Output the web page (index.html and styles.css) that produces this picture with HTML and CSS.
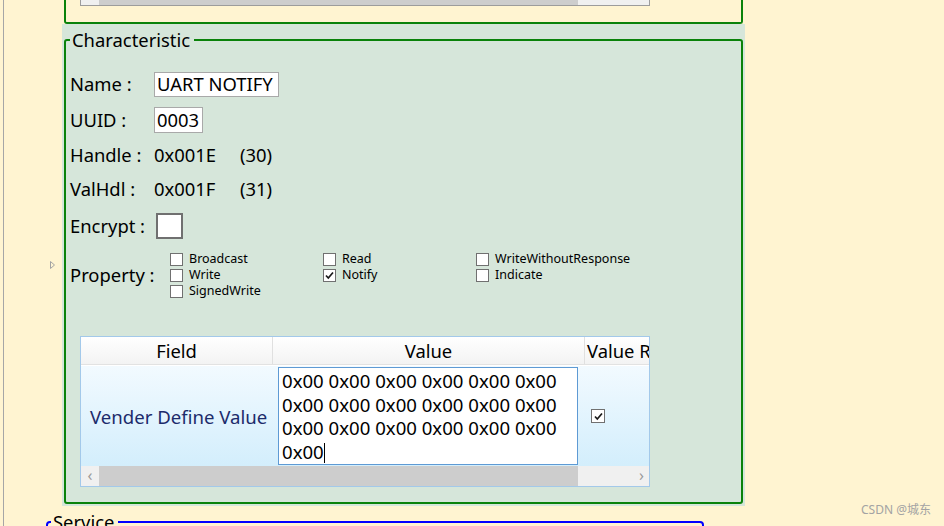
FILE: index.html
```html
<!DOCTYPE html>
<html>
<head>
<meta charset="utf-8">
<link rel="stylesheet" href="styles.css">
</head>
<body>
<div class="page">
  <div class="list-row">
    <div class="gutter"></div>
    <div class="item">
      <div class="prev-box">
        <div class="mini-scroll">
          <span class="sb-btn"></span><span class="sb-thumb"></span><span class="sb-rest"></span>
        </div>
      </div>
    </div>
  </div>

  <div class="list-row">
    <div class="gutter">
      <svg class="expander" width="6" height="8" viewBox="0 0 6 8"><path d="M0.5 0.5 L4.5 4 L0.5 7.5 Z" fill="none" stroke="#a3a3a3" stroke-width="1"/></svg>
    </div>
    <div class="item selected">
      <fieldset class="char">
        <legend>Characteristic</legend>
        <div class="row r-name">
          <span class="lbl">Name :</span>
          <span class="field f-name">UART NOTIFY</span>
        </div>
        <div class="row r-uuid">
          <span class="lbl">UUID :</span>
          <span class="field f-uuid">0003</span>
        </div>
        <div class="row r-handle">
          <span class="lbl">Handle :</span>
          <span class="hex">0x001E</span>
          <span>(30)</span>
        </div>
        <div class="row r-valhdl">
          <span class="lbl">ValHdl :</span>
          <span class="hex">0x001F</span>
          <span>(31)</span>
        </div>
        <div class="row r-encrypt">
          <span class="lbl">Encrypt :</span>
          <span class="big-check"></span>
        </div>
        <div class="row r-prop">
          <span class="lbl lbl-prop">Property :</span>
          <div class="props">
            <label class="cb"><span class="box"></span>Broadcast</label>
            <label class="cb"><span class="box"></span>Read</label>
            <label class="cb"><span class="box"></span>WriteWithoutResponse</label>
            <label class="cb"><span class="box"></span>Write</label>
            <label class="cb"><span class="box"><svg width="11" height="11" viewBox="0 0 11 11"><path d="M2 5.5 L4.3 8 L9 2.5" fill="none" stroke="#1a1a1a" stroke-width="1.7"/></svg></span>Notify</label>
            <label class="cb"><span class="box"></span>Indicate</label>
            <label class="cb"><span class="box"></span>SignedWrite</label>
          </div>
        </div>

        <div class="grid">
          <div class="grid-head">
            <div class="hcell c-field">Field</div>
            <div class="hcell c-value">Value</div>
            <div class="hcell c-vr">Value R</div>
          </div>
          <div class="grid-row">
            <div class="cell c-field vname">Vender Define Value</div>
            <div class="cell c-value">
              <div class="textarea">0x00 0x00 0x00 0x00 0x00 0x00<br>0x00 0x00 0x00 0x00 0x00 0x00<br>0x00 0x00 0x00 0x00 0x00 0x00<br>0x00<span class="caret"></span></div>
            </div>
            <div class="cell c-vr">
              <span class="box small-box"><svg width="11" height="11" viewBox="0 0 11 11"><path d="M2 5.5 L4.3 8 L9 2.5" fill="none" stroke="#1a1a1a" stroke-width="1.7"/></svg></span>
            </div>
          </div>
          <div class="grid-scroll">
            <span class="sb-btn">&lsaquo;</span><span class="sb-thumb"></span><span class="sb-rest"><span class="sb-arrow">&rsaquo;</span></span>
          </div>
        </div>
      </fieldset>
    </div>
  </div>

  <fieldset class="service">
    <legend>Service</legend>
  </fieldset>
</div>
<div class="watermark">CSDN @城东</div>
</body>
</html>
```

FILE: styles.css
```css
html, body {
  margin: 0;
  padding: 0;
}
body {
  background: #fff4d1;
  font-family: "Noto Sans", "Noto Sans CJK SC", sans-serif;
  color: #000;
  width: 944px;
  height: 526px;
  overflow: hidden;
  position: relative;
}
.page {
  margin-left: 3px;
  border-left: 1px solid #a6a6a6;
  height: 526px;
}
.list-row {
  display: flex;
}
.gutter {
  width: 58px;
  flex: none;
  display: flex;
  align-items: center;
  justify-content: flex-end;
  padding-right: 6px;
  box-sizing: border-box;
}
.expander {
  display: block;
}
.item {
  width: 683px;
  flex: none;
  padding: 0 2px;
  box-sizing: border-box;
}
.prev-box {
  height: 24px;
  box-sizing: border-box;
  border: 2px solid #0a820a;
  border-top: none;
  border-radius: 0 0 3px 3px;
}
.mini-scroll {
  margin-left: 14px;
  width: 570px;
  height: 6px;
  box-sizing: border-box;
  border: 1px solid #9c9c9c;
  border-top: none;
  display: flex;
}
.sb-btn {
  width: 18px;
  flex: none;
  background: #f0f0f0;
}
.sb-thumb {
  width: 479px;
  flex: none;
  background: #cdcdcd;
}
.sb-rest {
  flex: 1;
  background: #f0f0f0;
}
.selected {
  background: #d6e6da;
  padding-top: 6px;
  padding-bottom: 2px;
}
fieldset.char {
  margin: 0;
  border: 2px solid #0a820a;
  border-radius: 3px;
  padding: 16px 0 15px 4px;
  min-width: 0;
}
fieldset.char legend {
  font-size: 18.4px;
  line-height: 20px;
  padding: 0 4px 0 2px;
}
.row {
  display: flex;
  align-items: center;
  font-size: 18.4px;
  line-height: 22px;
}
.lbl {
  width: 84px;
  flex: none;
}
.r-name, .r-uuid { height: 36px; }
.r-handle, .r-valhdl { height: 34px; }
.r-encrypt { height: 40px; }
.r-prop { height: 50px; margin-top: 4px; }
.field {
  background: #fff;
  border: 1px solid #a9a9a9;
  padding: 0 2px;
  box-sizing: border-box;
  display: flex;
  align-items: center;
  white-space: nowrap;
}
.f-name { width: 125px; height: 25px; }
.f-uuid { width: 49px; height: 26px; }
.hex {
  width: 86px;
  flex: none;
}
.big-check {
  margin-left: 2px;
  width: 27px;
  height: 26px;
  box-sizing: border-box;
  border: 2px solid #707070;
  background: #fff;
}
.lbl-prop {
  width: 100px;
}
.props {
  display: grid;
  grid-template-columns: 153px 153px auto;
  grid-auto-rows: 16px;
  font-size: 12.5px;
  line-height: 16px;
}
.cb {
  display: flex;
  align-items: center;
  gap: 6px;
  white-space: nowrap;
}
.box {
  width: 13px;
  height: 13px;
  box-sizing: border-box;
  border: 1px solid #707070;
  background: #fff;
  display: flex;
  align-items: center;
  justify-content: center;
  flex: none;
}
.box svg { display: block; }

.grid {
  margin: 36px 0 0 10px;
  width: 570px;
  height: 151px;
  box-sizing: border-box;
  border: 1px solid #a3c9ea;
  overflow: hidden;
  display: flex;
  flex-direction: column;
}
.grid-head {
  display: flex;
  height: 28px;
  flex: none;
  background: linear-gradient(#ffffff, #f3f3f3);
  border-bottom: 1px solid #e2e2e2;
  box-sizing: border-box;
  font-size: 18.4px;
}
.hcell {
  display: flex;
  align-items: center;
  justify-content: center;
  border-right: 1px solid #e0e0e0;
  box-sizing: border-box;
  white-space: nowrap;
  flex: none;
}
.c-field { width: 192px; }
.c-value { width: 312px; }
.c-vr { width: 80px; }
.hcell.c-vr {
  justify-content: flex-start;
  padding-left: 2px;
}
.grid-row {
  display: flex;
  height: 101px;
  flex: none;
  background: linear-gradient(#f2faff, #d3eefc);
  border-top: 1px solid #fff;
  box-sizing: border-box;
}
.cell {
  flex: none;
  display: flex;
  align-items: center;
  box-sizing: border-box;
}
.vname {
  color: #1c2b6b;
  font-size: 18.6px;
  padding-left: 9px;
  white-space: nowrap;
}
.cell.c-value {
  padding: 1px 0 0 5px;
  align-items: flex-start;
}
.textarea {
  width: 300px;
  height: 98px;
  box-sizing: border-box;
  border: 1px solid #5e9ad4;
  background: #fff;
  font-size: 18.6px;
  line-height: 23.7px;
  padding: 1px 0 0 3px;
  white-space: nowrap;
}
.caret {
  display: inline-block;
  width: 1px;
  height: 20px;
  background: #000;
  vertical-align: -4px;
}
.cell.c-vr {
  padding-left: 6px;
}
.small-box {
  width: 14px;
  height: 14px;
}
.grid-scroll {
  display: flex;
  height: 20px;
  flex: none;
}
.grid-scroll .sb-btn {
  color: #9a9a9a;
  font-size: 16px;
  line-height: 19px;
  text-align: center;
}
.grid-scroll .sb-rest {
  display: flex;
  justify-content: flex-end;
}
.sb-arrow {
  color: #9a9a9a;
  font-size: 16px;
  line-height: 19px;
  padding-right: 5px;
}

fieldset.service {
  margin: 6px 0 0 42px;
  width: 658px;
  box-sizing: border-box;
  border: 2px solid #0000ff;
  border-radius: 4px;
  padding: 0 0 20px 3px;
}
fieldset.service legend {
  font-size: 18.4px;
  line-height: 20px;
  padding: 0 4px 0 2px;
}
.watermark {
  position: absolute;
  left: 861px;
  top: 502px;
  font-size: 12px;
  line-height: 16px;
  color: #a3a3a3;
  font-family: "Noto Sans", "Noto Sans CJK SC", sans-serif;
}
```
